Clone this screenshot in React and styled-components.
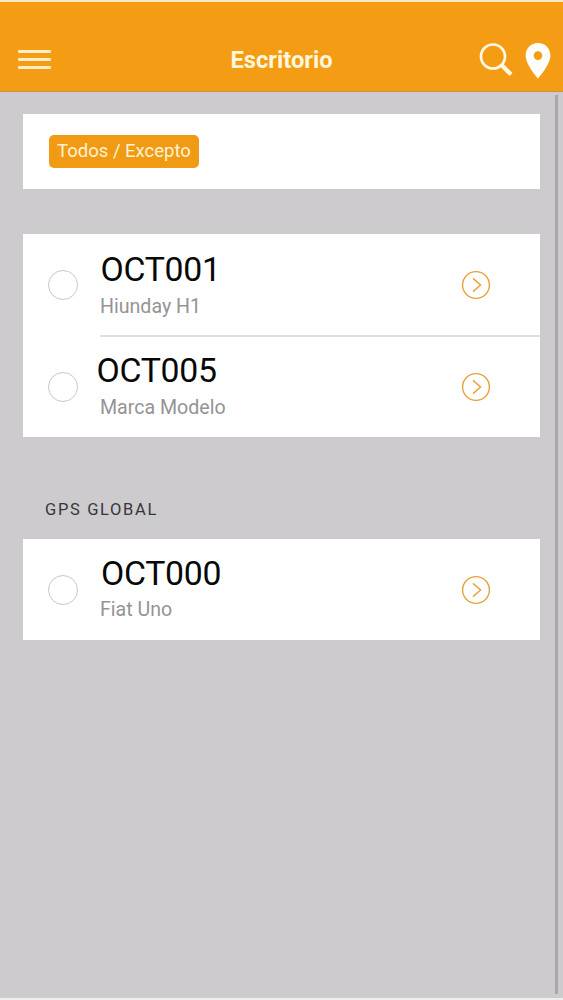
import React from 'react'
import styled, {createGlobalStyle} from 'styled-components';

const groups = [
    {
        title: '',
        items: [
            {id: 1, plate: 'OCT001', model: 'Hiunday H1', shift: 0.5, top: 16, gap: 5},
            {id: 2, plate: 'OCT005', model: 'Marca Modelo', shift: -3.5, top: 14, gap: 5},
        ]
    },
    {
        title: 'GPS GLOBAL',
        items: [
            {id: 3, plate: 'OCT000', model: 'Fiat Uno', shift: 1, top: 15, gap: 4},
        ]
    },
]

function SearchIcon() {
    return (
        <svg width="34" height="34" viewBox="0 0 34 34" fill="none" stroke="#fff8e4">
            <circle cx="14" cy="13.500" r="12" strokeWidth="2.7" />
            <path d="M22.500 22L32 31.500" strokeWidth="4.2" />
        </svg>
    )
}

function PinIcon() {
    return (
        <svg width="26" height="36" viewBox="0 0 26 36" fill="#fffefa">
            <path fillRule="evenodd" d="M13 0C6 0 .6 5.500 .6 12.400C.6 21.500 13 35.500 13 35.500S25.400 21.500 25.400 12.400C25.400 5.500 20 0 13 0ZM13 8.300A4.300 4.300 0 1 1 13 16.900A4.300 4.300 0 1 1 13 8.300Z" />
        </svg>
    )
}

function ArrowIcon() {
    return (
        <svg width="30" height="30" viewBox="0 0 30 30" fill="none" stroke="#e8a13a" strokeWidth="1.4">
            <circle cx="15" cy="15" r="13.400" />
            <path d="M12 8.400L19.600 15L12 21.600" />
        </svg>
    )
}

function VehicleRow({item}) {
    return (
        <Row>
            <Radio />
            <RowBody>
                <RowText $top={item.top}>
                    <Plate $shift={item.shift}>{item.plate}</Plate>
                    <Model $gap={item.gap}>{item.model}</Model>
                </RowText>
                <ArrowButton aria-label="Ver"><ArrowIcon /></ArrowButton>
            </RowBody>
        </Row>
    )
}

export default function App() {
    return (
        <Page>
            <GlobalStyle />
            <Header>
                <MenuButton aria-label="Menu"><span /><span /><span /></MenuButton>
                <Title>Escritorio</Title>
                <Actions>
                    <SearchIcon />
                    <PinIcon />
                </Actions>
            </Header>
            <Content>
                <Main>
                    <FilterCard>
                        <FilterButton>Todos / Excepto</FilterButton>
                    </FilterCard>
                    {groups.map((group, i) => {
                        return (
                            <Group key={i}>
                                {group.title && <GroupTitle>{group.title}</GroupTitle>}
                                <List>
                                    {group.items.map(item => <VehicleRow key={item.id} item={item} />)}
                                </List>
                            </Group>
                        )
                    })}
                </Main>
                <Scrollbar />
            </Content>
        </Page>
    )
}

const GlobalStyle = createGlobalStyle`
    * {
        box-sizing: border-box;
    }
    body {
        margin: 0;
        background-color: #cdcbcd;
        font-family: Roboto, "Liberation Sans", sans-serif;
    }
    button {
        border: none;
        padding: 0;
        background: none;
        font-family: inherit;
    }
    svg {
        display: block;
    }
`

const Page = styled.div`
    display: flex;
    flex-direction: column;
    height: 1000px;
    border-top: 2px solid #fbe9c4;
    border-bottom: 2px solid #efeeef;
    overflow: hidden;
`

const Header = styled.header`
    display: grid;
    grid-template-columns: 1fr auto 1fr;
    align-items: start;
    height: 90px;
    padding: 40px 12px 0;
    background-color: #f49d14;
    border-bottom: 1px solid #c9904a;
`

const MenuButton = styled.button`
    display: flex;
    flex-direction: column;
    gap: 5px;
    width: 33px;
    margin: 8px 0 0 6px;
    span {
        height: 3px;
        background-color: #ffeec4;
        border-radius: 1px;
    }
`

const Title = styled.h1`
    margin: 4px 0 0;
    font-size: 23.7px;
    line-height: 28px;
    font-weight: 700;
    color: #fff6dc;
`

const Actions = styled.div`
    display: flex;
    justify-content: flex-end;
    gap: 12px;
    padding-top: 1px;
`

const Content = styled.div`
    display: flex;
    flex: 1;
    justify-content: space-between;
    padding: 3px 5px 4px 23px;
`

const Main = styled.main`
    width: 517px;
    padding-top: 19px;
`

const Scrollbar = styled.div`
    width: 3px;
    background-color: #a9a7a9;
`

const FilterCard = styled.section`
    height: 75px;
    padding: 21px 26px;
    margin-bottom: 45px;
    background-color: #fff;
`

const FilterButton = styled.button`
    display: block;
    width: 150px;
    height: 33px;
    border-radius: 5px;
    background-color: #f19a13;
    color: #fff3d4;
    font-size: 18.5px;
    line-height: 31px;
    white-space: nowrap;
`

const Group = styled.section`
    margin-bottom: 62px;
`

const GroupTitle = styled.h2`
    margin: 0;
    padding: 0 0 18px 22px;
    font-size: 16.5px;
    line-height: 22px;
    font-weight: 400;
    letter-spacing: 1.65px;
    color: #38363a;
`

const List = styled.div`
    background-color: #fff;
`

const RowBody = styled.div`
    display: flex;
    flex: 1;
    justify-content: space-between;
    align-self: stretch;
    padding-right: 49px;
`

const Radio = styled.span`
    width: 30px;
    height: 30px;
    margin-right: 22px;
    border: 1px solid #c9c5c9;
    border-radius: 50%;
`

const Row = styled.div`
    display: flex;
    align-items: center;
    height: 101px;
    padding-left: 25px;
    & + & {
        height: 102px;
    }
    & + & ${RowBody} {
        border-top: 2px solid #e0dfe0;
    }
    & + & ${Radio} {
        margin-top: 2px;
    }
`

const RowText = styled.div`
    padding-top: ${props => props.$top}px;
`

const Plate = styled.div`
    margin-left: ${props => props.$shift}px;
    font-size: 33.8px;
    line-height: 40px;
    letter-spacing: -0.3px;
    color: #080808;
`

const Model = styled.div`
    margin-top: ${props => props.$gap}px;
    font-size: 19.6px;
    line-height: 24px;
    color: #959395;
`

const ArrowButton = styled.button`
    align-self: center;
`
